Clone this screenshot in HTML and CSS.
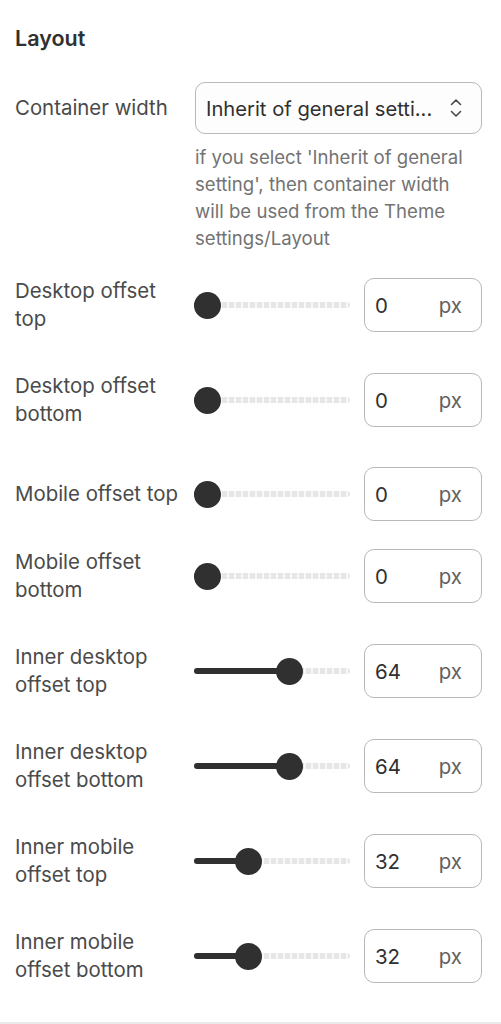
FILE: index.html
```html
<!DOCTYPE html>
<html lang="en">
<head>
<meta charset="utf-8">
<title>Layout</title>
<link rel="stylesheet" href="styles.css">
</head>
<body>
<div class="panel">
  <h2 class="title">Layout</h2>
  <div class="select-field">
    <div class="label">Container width</div>
    <div class="select">
      <span class="select-text">Inherit of general setti...</span>
      <svg class="chev" width="14" height="22" viewBox="0 0 14 22"><path d="M2.5 7.5 L7 3 L11.5 7.5" fill="none" stroke="#4a4a4a" stroke-width="1.6" stroke-linecap="round" stroke-linejoin="round"/><path d="M2.5 14.5 L7 19 L11.5 14.5" fill="none" stroke="#4a4a4a" stroke-width="1.6" stroke-linecap="round" stroke-linejoin="round"/></svg>
    </div>
  </div>
  <p class="help">if you select 'Inherit of general setting', then container width will be used from the Theme settings/Layout</p>
  <div class="rows">
    <div class="row"><div class="label">Desktop offset top</div><div class="slider"><div class="fill" style="width:14px"></div><div class="thumb" style="left:0px"></div></div><div class="num"><span class="val">0</span><span class="unit">px</span></div></div>
    <div class="row"><div class="label">Desktop offset bottom</div><div class="slider"><div class="fill" style="width:14px"></div><div class="thumb" style="left:0px"></div></div><div class="num"><span class="val">0</span><span class="unit">px</span></div></div>
    <div class="row"><div class="label">Mobile offset top</div><div class="slider"><div class="fill" style="width:14px"></div><div class="thumb" style="left:0px"></div></div><div class="num"><span class="val">0</span><span class="unit">px</span></div></div>
    <div class="row row-tight"><div class="label">Mobile offset bottom</div><div class="slider"><div class="fill" style="width:14px"></div><div class="thumb" style="left:0px"></div></div><div class="num"><span class="val">0</span><span class="unit">px</span></div></div>
    <div class="row"><div class="label">Inner desktop offset top</div><div class="slider"><div class="fill" style="width:96px"></div><div class="thumb" style="left:82px"></div></div><div class="num"><span class="val">64</span><span class="unit">px</span></div></div>
    <div class="row"><div class="label">Inner desktop offset bottom</div><div class="slider"><div class="fill" style="width:96px"></div><div class="thumb" style="left:82px"></div></div><div class="num"><span class="val">64</span><span class="unit">px</span></div></div>
    <div class="row"><div class="label">Inner mobile offset top</div><div class="slider"><div class="fill" style="width:55px"></div><div class="thumb" style="left:41px"></div></div><div class="num"><span class="val">32</span><span class="unit">px</span></div></div>
    <div class="row"><div class="label">Inner mobile offset bottom</div><div class="slider"><div class="fill" style="width:55px"></div><div class="thumb" style="left:41px"></div></div><div class="num"><span class="val">32</span><span class="unit">px</span></div></div>
  </div>
</div>
</body>
</html>
```
FILE: styles.css
```css
* { box-sizing: border-box; }
html, body { margin: 0; padding: 0; background: #ffffff; }
body { font-family: Inter, "Noto Sans", sans-serif; color: #303030; }
.panel {
  padding: 24px 19px 38px 15px;
  border-bottom: 2px solid #ebebeb;
}
.title {
  margin: 0 0 30px;
  font-size: 21.5px;
  line-height: 28px;
  font-weight: 600;
  color: #303030;
}
.select-field {
  display: grid;
  grid-template-columns: 180px 1fr;
  align-items: center;
}
.label {
  font-size: 20.4px;
  line-height: 28px;
  color: #4a4a4a;
}
.select {
  height: 52px;
  border: 1px solid #b8b8b8;
  border-radius: 10px;
  display: flex;
  align-items: center;
  justify-content: space-between;
  padding: 0 18px 0 10px;
  background: #fdfdfd;
}
.select-text { font-size: 20.2px; color: #303030; }
.chev { display: block; }
.help {
  margin: 10px 0 25px 180px;
  max-width: 280px;
  font-size: 18.6px;
  line-height: 27px;
  color: #737373;
}
.rows {
  display: flex;
  flex-direction: column;
  gap: 39px;
}
.row {
  display: grid;
  grid-template-columns: 179px 156px 1fr;
  align-items: center;
}
.row-tight { margin-top: -12px; }
.row .label { padding-right: 4px; }
.slider {
  position: relative;
  height: 28px;
}
.slider::before {
  content: "";
  position: absolute;
  left: 0;
  right: 0;
  top: 11px;
  height: 6px;
  border-radius: 3px;
  background: repeating-linear-gradient(90deg, #e6e6e6 0 5px, #f8f8f8 5px 7px);
}
.fill {
  position: absolute;
  left: 0;
  top: 11px;
  height: 6px;
  border-radius: 3px;
  background: #303030;
}
.thumb {
  position: absolute;
  top: 0.5px;
  width: 27px;
  height: 27px;
  border-radius: 50%;
  background: #303030;
}
.num {
  margin-left: 14px;
  height: 54px;
  border: 1px solid #b8b8b8;
  border-radius: 10px;
  display: flex;
  align-items: center;
  justify-content: space-between;
  padding: 0 19px 0 10px;
  font-size: 20.4px;
}
.val { color: #303030; }
.unit { color: #616161; }
```
